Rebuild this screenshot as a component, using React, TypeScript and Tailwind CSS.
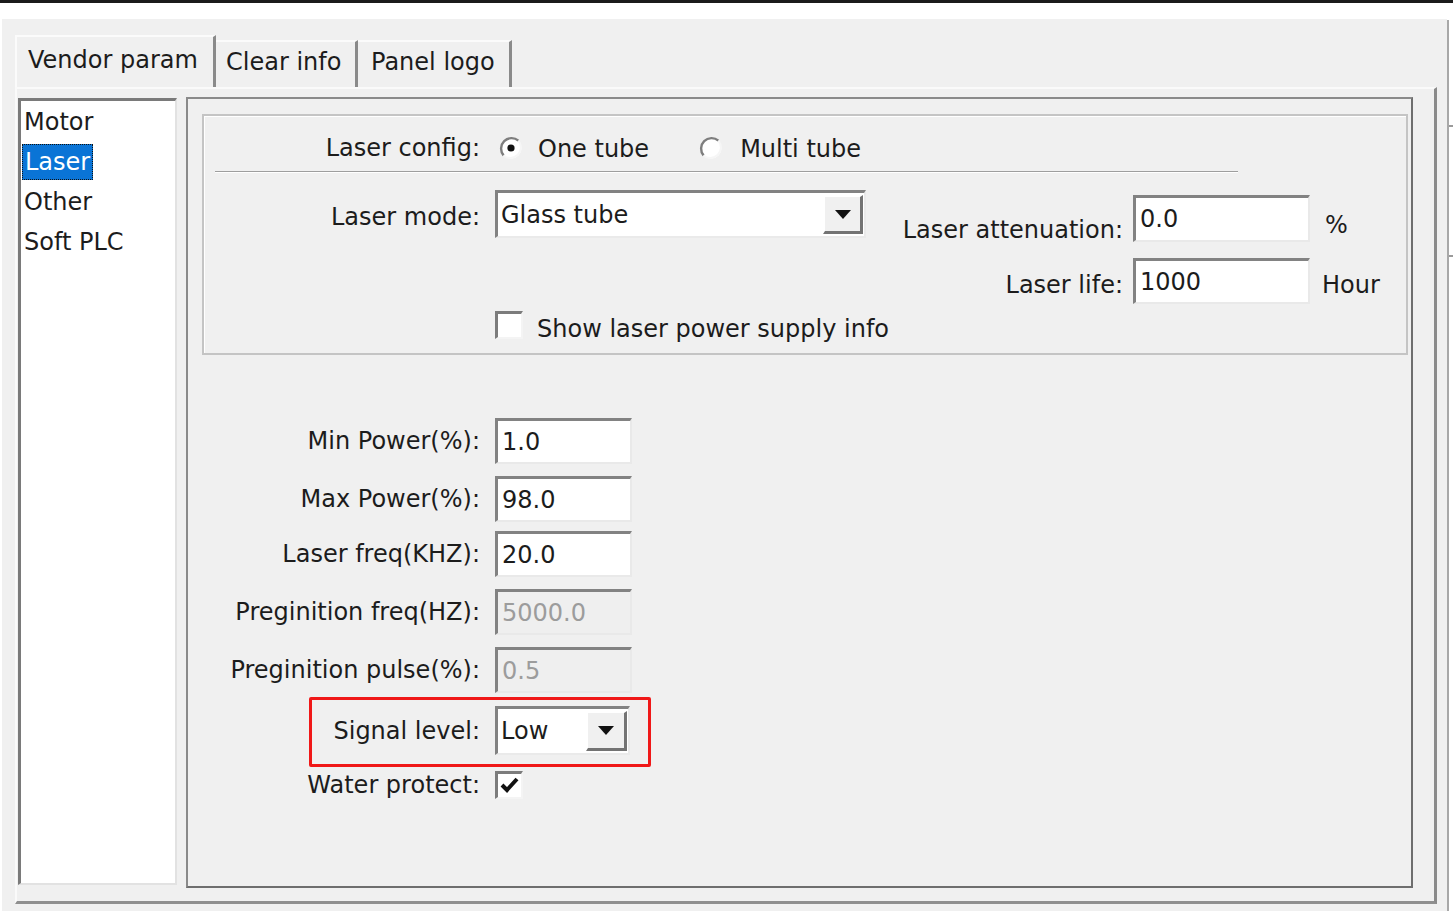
import React from "react";

const Radio = ({ checked }: { checked: boolean }) => (
  <svg width="26" height="26" viewBox="0 0 26 26" className="shrink-0">
    <circle cx="13" cy="13" r="10.5" fill="#ffffff" />
    <path d="M 5.6 20.4 A 10.5 10.5 0 0 1 20.4 5.6" stroke="#7e7e7e" strokeWidth="2.4" fill="none" />
    <path d="M 20.4 5.6 A 10.5 10.5 0 0 1 5.6 20.4" stroke="#f6f6f6" strokeWidth="2" fill="none" />
    {checked && <circle cx="13" cy="13" r="3.6" fill="#111111" />}
  </svg>
);

const Check = ({ checked }: { checked: boolean }) => (
  <div className="w-[28px] h-[28px] shrink-0 bg-white border-t-[3px] border-l-[3px] border-t-[#7c7c7c] border-l-[#7c7c7c] border-r-2 border-b-2 border-r-[#f4f4f4] border-b-[#f4f4f4] flex items-center justify-center">
    {checked && (
      <svg width="20" height="18" viewBox="0 0 20 18">
        <path d="M2 8 L7 13 L17 2" stroke="#111" strokeWidth="4" fill="none" strokeLinejoin="miter" />
      </svg>
    )}
  </div>
);

const Arrow = () => (
  <svg width="16" height="9" viewBox="0 0 16 9">
    <polygon points="0,0 16,0 8,9" fill="#111" />
  </svg>
);

const Edit = ({ value, w, h, disabled }: { value: string; w: string; h: string; disabled?: boolean }) => (
  <div
    className={`${w} ${h} shrink-0 border-t-[3px] border-l-[3px] border-t-[#828282] border-l-[#828282] border-r-2 border-b-2 border-r-[#e9e9e9] border-b-[#e9e9e9] flex items-center pl-[4px] ${
      disabled ? "bg-[#efefef] text-[#9c9c9c]" : "bg-white text-[#1c1c1c]"
    }`}
  >
    <span className="leading-[28px] whitespace-nowrap">{value}</span>
  </div>
);

const Combo = ({ value, w, h, btn }: { value: string; w: string; h: string; btn: string }) => (
  <div className={`${w} ${h} shrink-0 bg-white border-t-[3px] border-l-[3px] border-t-[#828282] border-l-[#828282] border-r-2 border-b-2 border-r-[#eaeaea] border-b-[#eaeaea] flex`}>
    <div className="flex-1 flex items-center pl-[3px]">
      <span className="leading-[28px] whitespace-nowrap">{value}</span>
    </div>
    <div className={`${btn} my-[2px] mr-[1px] bg-[#f0f0f0] border-t-2 border-l-2 border-t-white border-l-white border-r-[3px] border-b-[3px] border-r-[#737373] border-b-[#737373] flex items-center justify-center`}>
      <Arrow />
    </div>
  </div>
);

const FieldRow = ({ label, children, mt }: { label: string; children: React.ReactNode; mt: string }) => (
  <div className={`flex items-center shrink-0 ${mt}`}>
    <div className="w-[292px] text-right leading-[28px] shrink-0 whitespace-nowrap">{label}</div>
    <div className="ml-[15px]">{children}</div>
  </div>
);

export default function App() {
  return (
    <div className="w-[1453px] h-[911px] overflow-hidden bg-white flex flex-col font-['DejaVu_Sans',sans-serif] text-[24px] text-[#1c1c1c]">
      <div className="h-[3px] bg-[#1b1b1b] shrink-0" />
      <div className="flex flex-1 pt-[16px]">
        <div className="w-[2px] shrink-0" />
        {/* gray dialog area */}
        <div className="flex-1 bg-[#f0f0f0] pl-[13px] pt-[16px] flex flex-col">
          {/* tabs */}
          <div className="h-[52px] flex items-end shrink-0">
            <div className="w-[201px] h-[52px] pl-[13px] pt-[9px] bg-[#f0f0f0] border-t-2 border-l-2 border-t-[#fbfbfb] border-l-[#fbfbfb] border-r-[3px] border-r-[#8a8a8a]">
              <span className="leading-[28px] block -ml-[2px] whitespace-nowrap">Vendor param</span>
            </div>
            <div className="w-[142px] h-[47px] pl-[10px] pt-[6px] bg-[#f0f0f0] border-t-2 border-t-[#fbfbfb] border-r-[3px] border-r-[#8a8a8a]">
              <span className="leading-[28px] block whitespace-nowrap">Clear info</span>
            </div>
            <div className="w-[154px] h-[47px] pl-[13px] pt-[6px] bg-[#f0f0f0] border-t-2 border-t-[#fbfbfb] border-r-[3px] border-r-[#8a8a8a]">
              <span className="leading-[28px] block whitespace-nowrap">Panel logo</span>
            </div>
          </div>
          {/* tab page */}
          <div className="w-[1422px] h-[817px] shrink-0 border-l-2 border-t-2 border-l-[#fafafa] border-t-[#fafafa] border-r-[3px] border-b-[3px] border-r-[#8a8a8a] border-b-[#8f8f8f] flex items-start pl-[1px] pt-[8px]">
            {/* list box */}
            <div className="w-[159px] h-[787px] mt-[1px] shrink-0 bg-white border-t-[3px] border-l-[3px] border-t-[#7a7a7a] border-l-[#7a7a7a] border-r-2 border-b-2 border-r-[#e2e2e2] border-b-[#e2e2e2] pl-[1px] pt-[1px]">
              <div className="h-[40px] flex items-center pl-[2px]">
                <span className="leading-[28px]">Motor</span>
              </div>
              <div className="h-[40px] flex items-center">
                <span className="leading-[28px] h-[36px] flex items-center px-[2px] bg-[#0a74d6] text-white border border-dotted border-[#111]">Laser</span>
              </div>
              <div className="h-[40px] flex items-center pl-[2px]">
                <span className="leading-[28px]">Other</span>
              </div>
              <div className="h-[40px] flex items-center pl-[2px]">
                <span className="leading-[28px] whitespace-nowrap">Soft PLC</span>
              </div>
            </div>
            {/* right panel */}
            <div className="ml-[9px] w-[1227px] h-[791px] shrink-0 border-2 border-t-[#8a8a8a] border-l-[#8a8a8a] border-r-[#6e6e6e] border-b-[#6e6e6e] flex flex-col">
              {/* group box */}
              <div className="ml-[14px] mt-[15px] w-[1206px] h-[241px] shrink-0 border-2 border-[#c4c4c4] shadow-[inset_1px_1px_0_#ffffff] flex flex-col">
                <div className="mt-[12px] h-[40px] shrink-0 flex items-center">
                  <div className="w-[276px] text-right leading-[28px] shrink-0 whitespace-nowrap">Laser config:</div>
                  <div className="ml-[18px]"><Radio checked /></div>
                  <span className="ml-[14px] leading-[28px] mt-[2px] whitespace-nowrap">One tube</span>
                  <div className="ml-[49px]"><Radio checked={false} /></div>
                  <span className="ml-[16px] leading-[28px] mt-[2px] whitespace-nowrap">Multi tube</span>
                </div>
                <div className="mt-[3px] ml-[11px] w-[1023px] h-[2px] shrink-0 border-t border-t-[#9e9e9e] border-b border-b-white" />
                <div className="flex shrink-0">
                  <div className="w-[662px] shrink-0 flex flex-col">
                    <div className="mt-[17px] flex items-center">
                      <div className="w-[276px] text-right leading-[28px] shrink-0 pt-[6px] whitespace-nowrap">Laser mode:</div>
                      <div className="ml-[15px]">
                        <Combo value="Glass tube" w="w-[371px]" h="h-[48px]" btn="w-[40px]" />
                      </div>
                    </div>
                    <div className="mt-[69px] flex items-center">
                      <div className="ml-[291px]"><Check checked={false} /></div>
                      <span className="ml-[14px] leading-[28px] mt-[8px] whitespace-nowrap">Show laser power supply info</span>
                    </div>
                  </div>
                  <div className="flex flex-col">
                    <div className="mt-[22px] flex items-start">
                      <div className="w-[257px] text-right leading-[28px] shrink-0 mt-[21px] whitespace-nowrap">Laser attenuation:</div>
                      <div className="ml-[10px]"><Edit value="0.0" w="w-[177px]" h="h-[47px]" /></div>
                      <span className="ml-[15px] leading-[28px] mt-[16px]">%</span>
                    </div>
                    <div className="mt-[14px] flex items-start">
                      <div className="w-[257px] text-right leading-[28px] shrink-0 mt-[13px] whitespace-nowrap">Laser life:</div>
                      <div className="ml-[10px]"><Edit value="1000" w="w-[177px]" h="h-[46px]" /></div>
                      <span className="ml-[12px] leading-[28px] mt-[13px]">Hour</span>
                    </div>
                  </div>
                </div>
              </div>

              <FieldRow label="Min Power(%):" mt="mt-[63px]">
                <Edit value="1.0" w="w-[137px]" h="h-[46px]" />
              </FieldRow>
              <FieldRow label="Max Power(%):" mt="mt-[12px]">
                <Edit value="98.0" w="w-[137px]" h="h-[46px]" />
              </FieldRow>
              <FieldRow label="Laser freq(KHZ):" mt="mt-[9px]">
                <Edit value="20.0" w="w-[137px]" h="h-[46px]" />
              </FieldRow>
              <FieldRow label="Preginition freq(HZ):" mt="mt-[12px]">
                <Edit value="5000.0" w="w-[137px]" h="h-[46px]" disabled />
              </FieldRow>
              <FieldRow label="Preginition pulse(%):" mt="mt-[12px]">
                <Edit value="0.5" w="w-[137px]" h="h-[46px]" disabled />
              </FieldRow>
              <div className="relative mt-[13px] shrink-0">
                <FieldRow label="Signal level:" mt="mt-0">
                  <Combo value="Low" w="w-[135px]" h="h-[49px]" btn="w-[41px]" />
                </FieldRow>
                <div className="absolute left-[121px] top-[-9px] w-[342px] h-[70px] border-[3px] border-[#f01818] rounded-[2px] pointer-events-none" />
              </div>
              <FieldRow label="Water protect:" mt="mt-[16px]">
                <Check checked />
              </FieldRow>
            </div>
          </div>
        </div>
        {/* right strip */}
        <div className="w-[6px] shrink-0 flex flex-col">
          <div className="h-[1px]" />
          <div className="flex-1 flex">
            <div className="w-[2px] bg-[#a8a8a8]" />
            <div className="flex-1 bg-white flex flex-col">
              <div className="h-[105px]" />
              <div className="h-[2px] bg-[#9a9a9a]" />
              <div className="h-[128px]" />
              <div className="h-[2px] bg-[#9a9a9a]" />
            </div>
          </div>
        </div>
      </div>
    </div>
  );
}
